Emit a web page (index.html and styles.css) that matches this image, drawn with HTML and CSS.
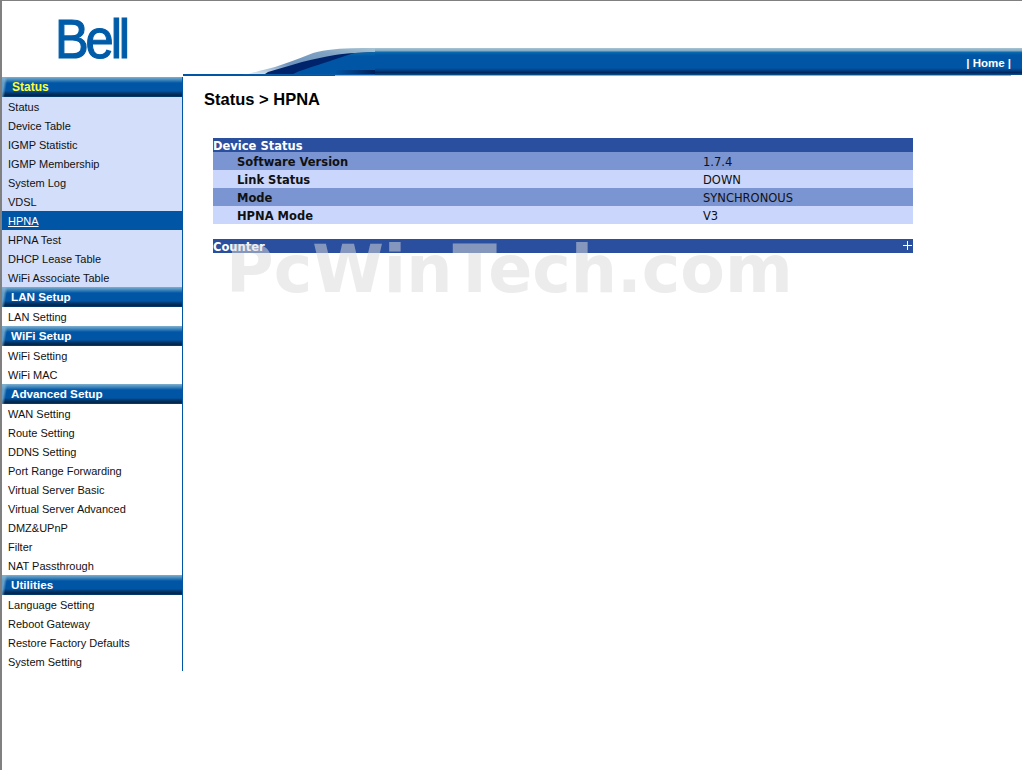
FILE: index.html
```html
<!DOCTYPE html>
<html lang="en">
<head>
  <meta charset="UTF-8">
  <title>Status &gt; HPNA</title>
  <link rel="stylesheet" href="styles.css">
</head>
<body>

  <div class="header">
    <div class="logo-box"><span class="logo">Bell</span></div>
    <div class="band">
      <svg class="swoosh" width="132" height="28" viewBox="0 0 132 28">
        <defs>
          <linearGradient id="swooshLight" x1="0" y1="1" x2="1" y2="0">
            <stop offset="0" stop-color="#e4edf3"/>
            <stop offset="0.35" stop-color="#6f94bd"/>
            <stop offset="0.7" stop-color="#7fa2c2"/>
            <stop offset="1" stop-color="#a9c4d3"/>
          </linearGradient>
          <linearGradient id="swooshBlue" x1="0" y1="0" x2="0" y2="1">
            <stop offset="0" stop-color="#0a6cb0"/>
            <stop offset="0.2" stop-color="#0055a5"/>
            <stop offset="1" stop-color="#0055a5"/>
          </linearGradient>
          <linearGradient id="swooshShade" x1="0" y1="0" x2="1" y2="0">
            <stop offset="0" stop-color="#002057" stop-opacity="0"/>
            <stop offset="1" stop-color="#002057"/>
          </linearGradient>
        </defs>
        <path d="M5 26 C16 23 24 21 32 19 C44 15 55 11 65 7 C72 4 78 3 85 2 C100 0 116 0 132 0 V26 Z" fill="url(#swooshLight)"/>
        <path d="M22 26 L25 24 C36 21 48 17 59 14 C70 11 81 9 92 7 C99 6 105 5 112 5 L132 4 V26 Z" fill="#00246b"/>
        <path d="M50 26 C58 22 66 20 75 17 C84 14 92 11 99 9 C104 7 108 6 112 5 L132 4 V26 Z" fill="url(#swooshBlue)"/>
        <rect x="92" y="22" width="40" height="4" fill="url(#swooshShade)"/>
        <rect x="0" y="26" width="132" height="1" fill="#0a5aa8"/>
        <rect x="92" y="27" width="40" height="1" fill="#8fb0c8"/>
      </svg>
      <div class="band-bar"><span class="home-link">| Home |</span></div>
    </div>
  </div>

  <div class="page">
    <div class="sidebar">
      <div class="menu-head first">Status</div>
      <div class="menu-group tinted">
        <a class="menu-item">Status</a>
        <a class="menu-item">Device Table</a>
        <a class="menu-item">IGMP Statistic</a>
        <a class="menu-item">IGMP Membership</a>
        <a class="menu-item">System Log</a>
        <a class="menu-item">VDSL</a>
        <a class="menu-item active">HPNA</a>
        <a class="menu-item">HPNA Test</a>
        <a class="menu-item">DHCP Lease Table</a>
        <a class="menu-item">WiFi Associate Table</a>
      </div>
      <div class="menu-head">LAN Setup</div>
      <div class="menu-group">
        <a class="menu-item">LAN Setting</a>
      </div>
      <div class="menu-head">WiFi Setup</div>
      <div class="menu-group">
        <a class="menu-item">WiFi Setting</a>
        <a class="menu-item">WiFi MAC</a>
      </div>
      <div class="menu-head">Advanced Setup</div>
      <div class="menu-group">
        <a class="menu-item">WAN Setting</a>
        <a class="menu-item">Route Setting</a>
        <a class="menu-item">DDNS Setting</a>
        <a class="menu-item">Port Range Forwarding</a>
        <a class="menu-item">Virtual Server Basic</a>
        <a class="menu-item">Virtual Server Advanced</a>
        <a class="menu-item">DMZ&amp;UPnP</a>
        <a class="menu-item">Filter</a>
        <a class="menu-item">NAT Passthrough</a>
      </div>
      <div class="menu-head">Utilities</div>
      <div class="menu-group">
        <a class="menu-item">Language Setting</a>
        <a class="menu-item">Reboot Gateway</a>
        <a class="menu-item">Restore Factory Defaults</a>
        <a class="menu-item">System Setting</a>
      </div>
    </div>

    <div class="content">
      <h1 class="page-title">Status &gt; HPNA</h1>

      <div class="panel">
        <div class="panel-head">Device Status</div>
        <div class="row dark"><span class="row-label">Software Version</span><span>1.7.4</span></div>
        <div class="row"><span class="row-label">Link Status</span><span>DOWN</span></div>
        <div class="row dark"><span class="row-label">Mode</span><span>SYNCHRONOUS</span></div>
        <div class="row"><span class="row-label">HPNA Mode</span><span>V3</span></div>
      </div>

      <div class="panel">
        <div class="panel-head">Counter<span class="plus"></span></div>
      </div>
    </div>

    <div class="watermark">PcWinTech.com</div>
  </div>

</body>
</html>
```

FILE: styles.css
```css
html, body {
  margin: 0;
  height: 100%;
}

body {
  box-sizing: border-box;
  height: 770px;
  overflow: hidden;
  background: white;
  border-top: 1px solid #808080;
  border-left: 2px solid #808080;
  font-family: 'Liberation Sans', Arial, sans-serif;
  color: black;
}

.header {
  display: flex;
  height: 76px;
}

.logo-box {
  width: 241px;
  flex: none;
  padding: 13px 0 0 53px;
  box-sizing: border-box;
}

.logo {
  display: block;
  font-size: 55px;
  line-height: 50px;
  letter-spacing: -3.4px;
  color: #005ca8;
  -webkit-text-stroke: 1.2px #005ca8;
  transform: scaleX(0.92);
  transform-origin: left center;
}

.band {
  flex: 1;
  display: flex;
  align-self: flex-start;
  height: 28px;
  margin-top: 47px;
  position: relative;
  z-index: 1;
}

.swoosh {
  flex: none;
  display: block;
}

.band-bar {
  flex: 1;
  position: relative;
  display: flex;
  justify-content: flex-end;
  align-items: center;
  padding-top: 1px;
  box-sizing: border-box;
  background: linear-gradient(to bottom, #a9c4d3 0, #7fa8c4 3px, #0a6cb0 4px, #0055a5 7px, #0055a5 20px, #003a7c 23px, #002057 25px, #0a4a84 26px, #0a4a84 27px, white 27px);
}

.band-bar::after {
  content: "";
  position: absolute;
  left: 0;
  right: 11px;
  bottom: 0;
  height: 1px;
  background: #8fb0c8;
}

.home-link {
  color: white;
  font-size: 11.5px;
  font-weight: bold;
  margin-right: 11px;
}

.page {
  position: relative;
  display: flex;
  align-items: flex-start;
  height: 692px;
}

.sidebar {
  width: 180px;
  flex: none;
  border-right: 1px solid #0055a5;
  font-size: 11px;
}

.menu-head {
  height: 20px;
  line-height: 20px;
  padding-left: 9px;
  color: white;
  font-size: 11.7px;
  font-weight: bold;
  background:
    linear-gradient(100deg, rgba(127, 176, 208, 0.8) 0, rgba(127, 176, 208, 0.8) 3px, transparent 6px),
    linear-gradient(to bottom, #7fb0d0 0, #3f86bb 3px, #0055a5 6px, #0055a5 14px, #003a70 16px, #00284f 18px, #00284f 19px, #0a4a84 20px);
  box-sizing: border-box;
}

.menu-head.first {
  color: #ffff33;
  font-size: 12px;
  padding-left: 10px;
}

.menu-group.tinted {
  background: #d2defa;
}

.menu-item {
  display: block;
  height: 19px;
  line-height: 21px;
  padding-left: 6px;
  color: #111;
}

.menu-item.active {
  background: #0055a5;
  color: white;
  text-decoration: underline;
}

.content {
  flex: 1;
  align-self: stretch;
  padding-left: 30px;
  border-top: 2px solid #0055a5;
  margin-top: -3px;
}

.page-title {
  margin: 14px 0 30px -9px;
  font-size: 16.5px;
  line-height: 18px;
  font-weight: bold;
}

.panel {
  width: 700px;
  margin-bottom: 15px;
  font-family: 'DejaVu Sans', Verdana, sans-serif;
  font-size: 11.5px;
}

.panel-head {
  position: relative;
  height: 14px;
  line-height: 17px;
  background: #2b4f9f;
  color: white;
  font-weight: bold;
}

.plus {
  position: absolute;
  right: 1px;
  top: 2px;
  width: 9px;
  height: 9px;
  background:
    linear-gradient(white, white) center / 9px 1px no-repeat,
    linear-gradient(white, white) center / 1px 9px no-repeat;
}

.row {
  display: flex;
  height: 18px;
  line-height: 20px;
  background: #cad6fc;
  color: #111;
}

.row.dark {
  background: #7b94d2;
}

.row-label {
  width: 490px;
  padding-left: 24px;
  box-sizing: border-box;
  font-weight: bold;
}

.watermark {
  position: absolute;
  left: 224px;
  top: 158px;
  font-family: 'DejaVu Sans', Verdana, sans-serif;
  font-size: 65px;
  line-height: 70px;
  font-weight: bold;
  color: rgba(219, 219, 219, 0.52);
  white-space: nowrap;
}
```
